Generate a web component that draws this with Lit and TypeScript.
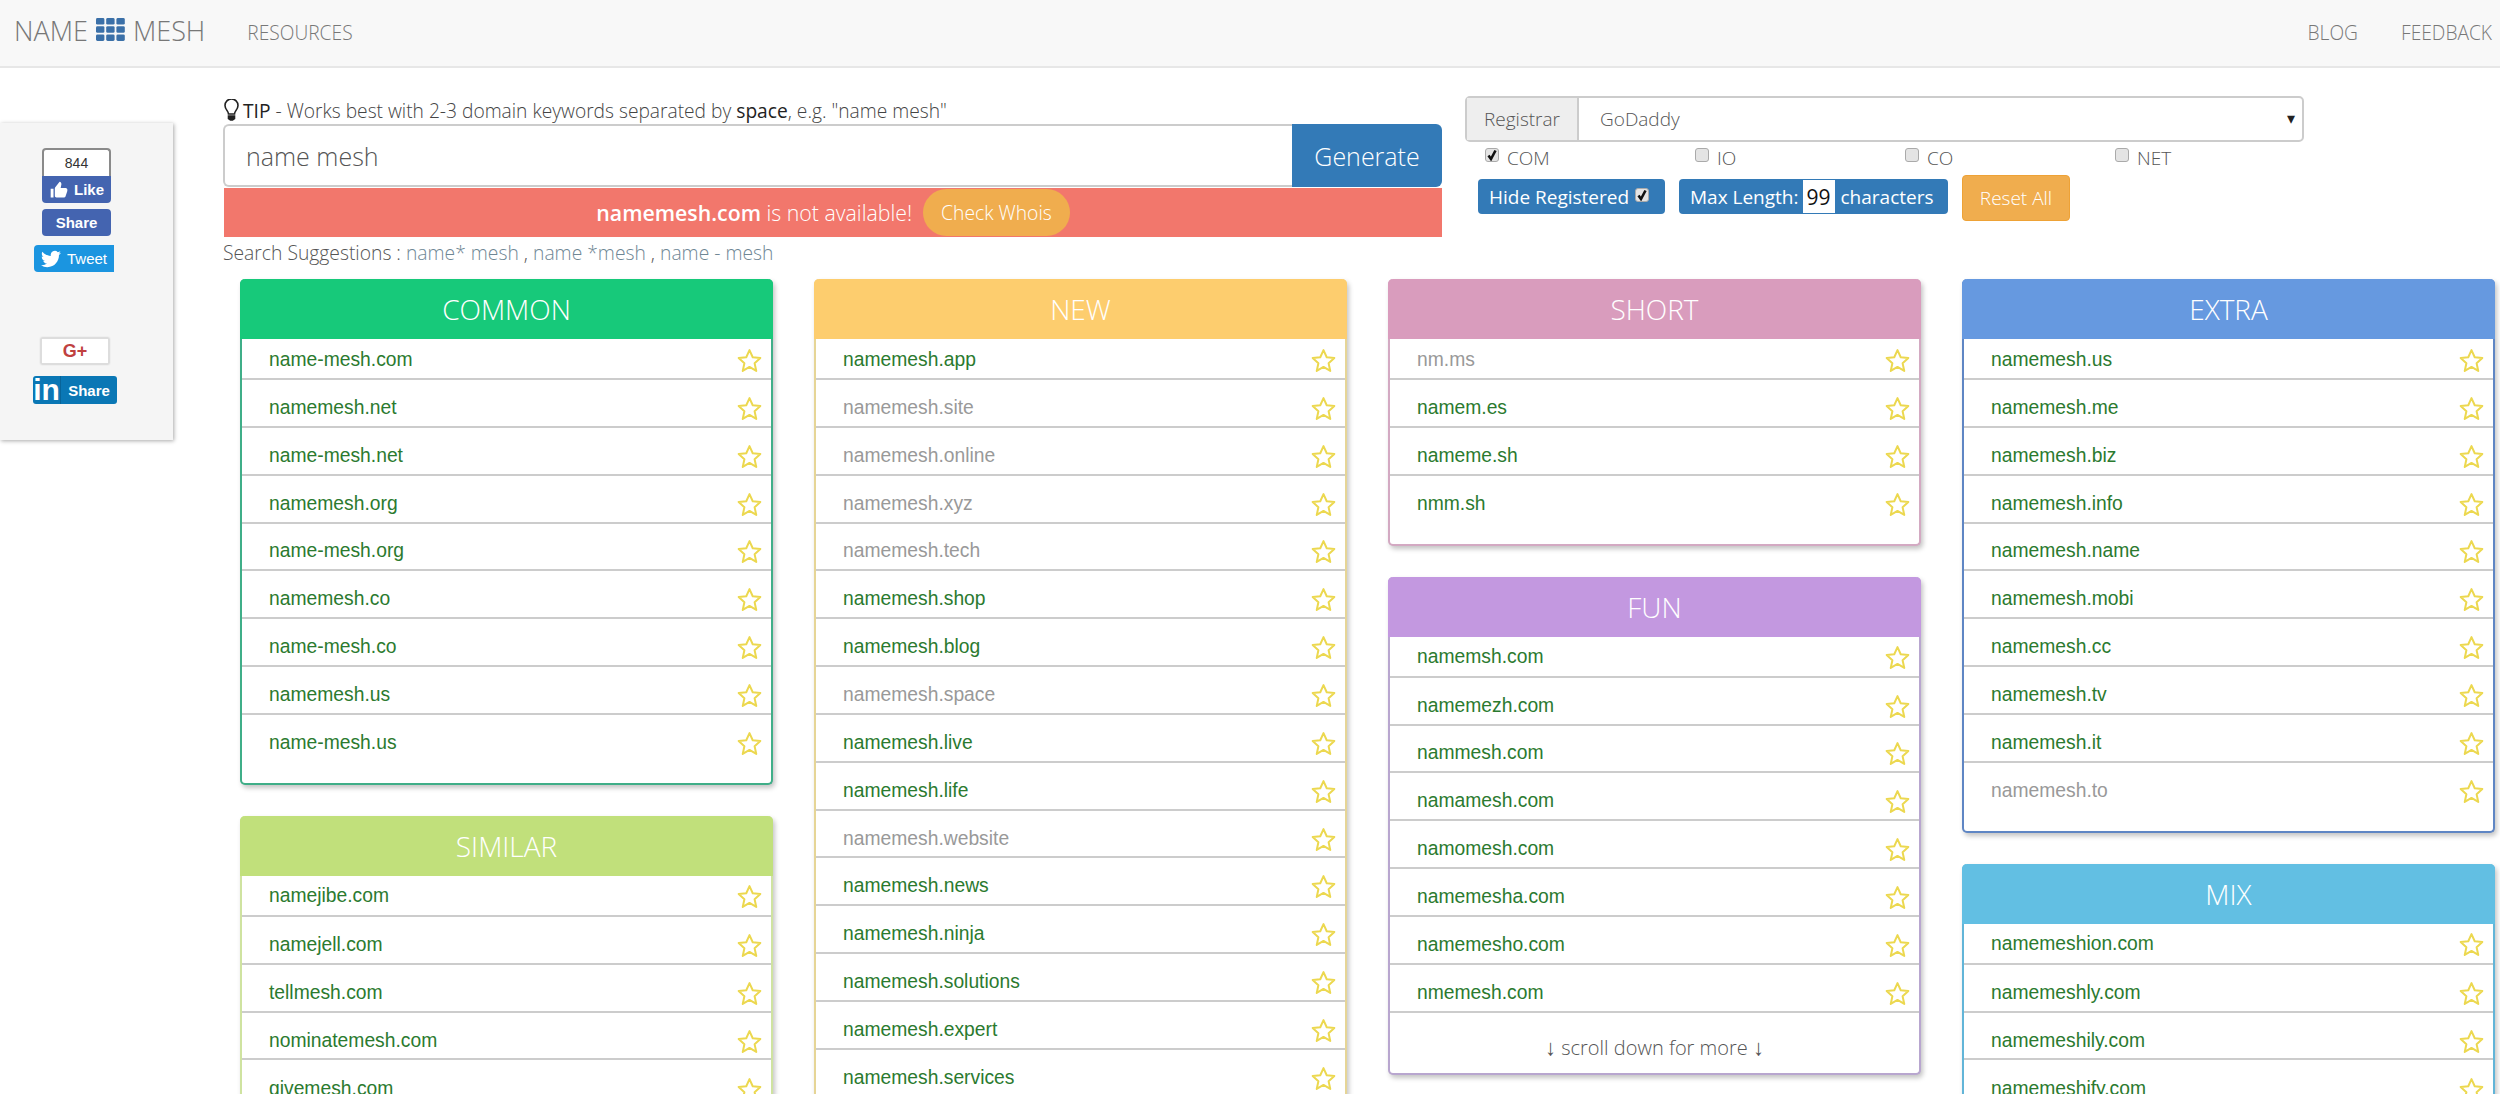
import { LitElement, css, html, svg } from "lit";
import { customElement } from "lit/decorators.js";

type Domain = string | { gray: string };
interface Panel {
  title: string;
  color: string;
  edge: string;
  rows: Domain[];
  more?: boolean;
}

const g = (gray: string): Domain => ({ gray });

const COLUMNS: Panel[][] = [
  [
    {
      title: "COMMON",
      color: "#17c97a",
      edge: "#3fae88",
      rows: [
        "name-mesh.com",
        "namemesh.net",
        "name-mesh.net",
        "namemesh.org",
        "name-mesh.org",
        "namemesh.co",
        "name-mesh.co",
        "namemesh.us",
        "name-mesh.us",
      ],
    },
    {
      title: "SIMILAR",
      color: "#c1e07b",
      edge: "#cfe3a0",
      rows: ["namejibe.com", "namejell.com", "tellmesh.com", "nominatemesh.com", "givemesh.com"],
    },
  ],
  [
    {
      title: "NEW",
      color: "#fdcd6e",
      edge: "#e6d596",
      rows: [
        "namemesh.app",
        g("namemesh.site"),
        g("namemesh.online"),
        g("namemesh.xyz"),
        g("namemesh.tech"),
        "namemesh.shop",
        "namemesh.blog",
        g("namemesh.space"),
        "namemesh.live",
        "namemesh.life",
        g("namemesh.website"),
        "namemesh.news",
        "namemesh.ninja",
        "namemesh.solutions",
        "namemesh.expert",
        "namemesh.services",
      ],
    },
  ],
  [
    {
      title: "SHORT",
      color: "#d99cbd",
      edge: "#d3a9c2",
      rows: [g("nm.ms"), "namem.es", "nameme.sh", "nmm.sh"],
    },
    {
      title: "FUN",
      color: "#c398e0",
      edge: "#b8a6cf",
      more: true,
      rows: [
        "namemsh.com",
        "namemezh.com",
        "nammesh.com",
        "namamesh.com",
        "namomesh.com",
        "namemesha.com",
        "namemesho.com",
        "nmemesh.com",
      ],
    },
  ],
  [
    {
      title: "EXTRA",
      color: "#6699e0",
      edge: "#5f86c4",
      rows: [
        "namemesh.us",
        "namemesh.me",
        "namemesh.biz",
        "namemesh.info",
        "namemesh.name",
        "namemesh.mobi",
        "namemesh.cc",
        "namemesh.tv",
        "namemesh.it",
        g("namemesh.to"),
      ],
    },
    {
      title: "MIX",
      color: "#62bfe3",
      edge: "#62b5d8",
      rows: ["namemeshion.com", "namemeshly.com", "namemeshily.com", "namemeshify.com"],
    },
  ],
];

const TLDS = [
  { name: "COM", on: true },
  { name: "IO", on: false },
  { name: "CO", on: false },
  { name: "NET", on: false },
];

const star = svg`<polygon points="12,2 15.1,8.9 22.4,9.6 16.9,14.6 18.5,22 12,18.2 5.5,22 7.1,14.6 1.6,9.6 8.9,8.9" />`;
const TWITTER =
  "M23.953 4.57a10 10 0 01-2.825.775 4.958 4.958 0 002.163-2.723c-.951.555-2.005.959-3.127 1.184a4.92 4.92 0 00-8.384 4.482C7.69 8.095 4.067 6.13 1.64 3.162a4.822 4.822 0 00-.666 2.475c0 1.71.87 3.213 2.188 4.096a4.904 4.904 0 01-2.228-.616v.06a4.923 4.923 0 003.946 4.827 4.996 4.996 0 01-2.212.085 4.936 4.936 0 004.604 3.417 9.867 9.867 0 01-6.102 2.105c-.39 0-.779-.023-1.17-.067a13.995 13.995 0 007.557 2.209c9.053 0 13.998-7.496 13.998-13.985 0-.21 0-.42-.015-.63A9.935 9.935 0 0024 4.59z";
const THUMB =
  "M2 21h3.4V10.500H2V21zm20-9.500c0-1.100-.9-2-2-2h-6l.9-4.400v-.3c0-.9-.5-2.800-2.200-2.800L8 8c-.5.5-1 1-1 2v9c0 1.100.9 2 2 2h9c.8 0 1.500-.5 1.800-1.200l2-6c.1-.2.2-.5.2-.8v-1.500z";

@customElement("app-root")
export class AppRoot extends LitElement {
  static override styles = css`
    :host {
      display: block;
      width: 2500px;
      height: 1094px;
      overflow: hidden;
      background: #fff;
      color: #333;
      font-family: "Open Sans", sans-serif;
      font-weight: 300;
    }
    * {
      box-sizing: border-box;
    }

    /* top bar */
    .nav {
      display: flex;
      align-items: center;
      height: 68px;
      padding: 0 8px 0 14px;
      background: #f8f8f8;
      border-bottom: 2px solid #e7e7e7;
      color: #777;
      font-size: 19.2px;
    }
    .logo {
      display: flex;
      align-items: center;
      gap: 8px;
      margin-right: 42px;
      font-size: 27px;
      margin-top: -6px;
    }
    .logo svg {
      width: 29px;
      height: 23px;
      fill: #3b70a8;
      margin-top: -2px;
    }
    .nav a {
      margin-top: -1px;
    }
    .nav .right {
      margin-left: auto;
      display: flex;
      gap: 43px;
    }

    .page {
      display: flex;
      align-items: flex-start;
    }

    /* share box */
    .social {
      flex: none;
      display: flex;
      flex-direction: column;
      align-items: center;
      width: 173px;
      height: 317px;
      margin-top: 55px;
      padding: 25px 22px 0 0;
      background: #f5f5f5;
      box-shadow: 1px 1px 4px #aaa;
      font-family: "Liberation Sans", Arial, sans-serif;
      font-weight: 700;
    }
    .fb {
      display: flex;
      align-items: center;
      justify-content: center;
      gap: 5px;
      width: 69px;
      color: #fff;
      font-size: 15px;
      background: #4464b0;
      border-radius: 0 0 4px 4px;
      height: 27px;
      margin-left: 2px;
    }
    .fb svg {
      width: 20px;
      height: 20px;
      fill: #fff;
    }
    .fb.count {
      height: 28px;
      background: #fff;
      border: 2px solid #8a8a8a;
      border-bottom: 0;
      border-radius: 4px 4px 0 0;
      color: #333;
      font-size: 14px;
      font-weight: 400;
    }
    .fb.share {
      height: 27px;
      margin-top: 6px;
      border-radius: 4px;
    }
    .tweet {
      display: flex;
      align-items: center;
      justify-content: center;
      gap: 6px;
      width: 80px;
      height: 27px;
      margin: 9px 0 0 -3px;
      background: #1b95e0;
      border-radius: 4px 0 0 4px;
      color: #fff;
      font-size: 15px;
      font-weight: 400;
    }
    .tweet svg {
      width: 20px;
      height: 20px;
      fill: #fff;
    }
    .gplus {
      display: flex;
      align-items: center;
      justify-content: center;
      width: 68px;
      height: 26px;
      margin: 66px 0 0 -1px;
      background: #fff;
      border: 1px solid #ddd;
      box-shadow: 0 0 2px #aaa;
      color: #c0413f;
      font-size: 18px;
    }
    .linkedin {
      display: flex;
      align-items: center;
      width: 84px;
      height: 28px;
      margin: 12px 0 0 -1px;
      background: #0a77b5;
      border-radius: 3px;
      color: #fff;
      font-size: 15px;
    }
    .linkedin b {
      width: 28px;
      border-right: 1px solid #086499;
      text-align: center;
      font-size: 30px;
      line-height: 28px;
    }
    .linkedin span {
      flex: 1;
      text-align: center;
    }

    .main {
      margin-left: 50px;
      padding-top: 28px;
    }
    .top {
      display: flex;
      height: 183px;
    }

    /* search */
    .search {
      width: 1219px;
      margin-right: 23px;
    }
    .tip {
      display: flex;
      align-items: center;
      height: 28px;
      font-size: 19.2px;
      color: #444;
      white-space: pre;
    }
    .tip svg {
      width: 17px;
      height: 22px;
      margin-right: 3px;
      fill: none;
      stroke: #222;
      stroke-width: 1.6;
    }
    .tip b {
      font-weight: 400;
      color: #222;
    }
    .bar {
      display: flex;
      height: 63px;
    }
    .bar input {
      flex: 1;
      padding: 0 21px;
      border: 2px solid #ccc;
      border-right: 0;
      border-radius: 6px 0 0 6px;
      outline: none;
      background: #fff;
      color: #555;
      font: 300 25px "Open Sans", sans-serif;
    }
    .bar button {
      width: 150px;
      border: 0;
      border-radius: 0 6px 6px 0;
      background: #337ab7;
      color: #fff;
      font: 300 25px "Open Sans", sans-serif;
    }
    .status {
      display: flex;
      align-items: center;
      justify-content: center;
      gap: 11px;
      height: 49px;
      margin: 1px 0 0 1px;
      background: #f2776c;
      color: #fff;
      font-size: 21.3px;
      white-space: pre;
    }
    .status b {
      font-weight: 600;
    }
    .status .whois {
      padding: 0 18px;
      height: 47px;
      line-height: 47px;
      border-radius: 24px;
      background: #f0ad4e;
      font-size: 19.3px;
    }
    .suggest {
      margin-top: 4px;
      font-size: 19.3px;
      line-height: 24px;
      color: #555;
    }
    .suggest a {
      color: #6f8795;
    }

    /* registrar and filters */
    .filters {
      width: 839px;
    }
    .registrar {
      display: flex;
      align-items: stretch;
      height: 46px;
      border: 2px solid #ccc;
      border-radius: 5px;
      font-size: 19px;
      color: #555;
      line-height: 42px;
    }
    .registrar .label {
      width: 112px;
      background: #eee;
      border-right: 2px solid #ccc;
      text-align: center;
    }
    .registrar .value {
      flex: 1;
      padding-left: 21px;
    }
    .registrar .arrow {
      width: 15px;
      font-size: 16px;
      color: #222;
      font-family: "DejaVu Sans", sans-serif;
    }
    .tlds {
      display: grid;
      grid-template-columns: repeat(4, 210px);
      height: 37px;
      padding: 4px 0 0 20px;
      font-size: 19px;
      color: #555;
    }
    .tld {
      display: flex;
      align-items: flex-start;
      gap: 8px;
      line-height: 24px;
    }
    .cb {
      display: block;
      flex: none;
      width: 14px;
      height: 14px;
      margin-top: 2px;
      border: 1px solid #aaa;
      border-radius: 3px;
      background: #e4e4e4;
      white-space: normal;
    }
    .cb svg {
      display: block;
      width: 12px;
      height: 12px;
      fill: none;
      stroke: #111;
      stroke-width: 2.6;
    }
    .actions {
      display: flex;
      align-items: flex-start;
      padding: 0 0 0 13px;
      gap: 14px;
      margin-top: -4px;
    }
    .pill {
      display: flex;
      align-items: center;
      height: 35px;
      margin-top: 4px;
      padding: 0 11px;
      border-radius: 4px;
      background: #337ab7;
      color: #fff;
      font-size: 19px;
      font-weight: 400;
      white-space: pre;
    }
    .pill.hide {
      width: 187px;
    }
    .pill.len {
      width: 269px;
    }
    .pill .cb {
      margin: -4px 0 0 6px;
    }
    .pill input {
      width: 32px;
      height: 33px;
      margin: 0 6px 0 4px;
      padding: 0;
      border: 0;
      background: #fff;
      color: #111;
      text-align: center;
      font: 400 21px "Open Sans", sans-serif;
    }
    .reset {
      display: flex;
      align-items: center;
      justify-content: center;
      width: 108px;
      height: 46px;
      border: 1px solid #eea236;
      border-radius: 4px;
      background: #f0ad4e;
      color: #fff;
      font-size: 19px;
    }

    /* result panels */
    .columns {
      display: flex;
      gap: 41px;
      margin-left: 17px;
    }
    .column {
      display: flex;
      flex-direction: column;
      gap: 31px;
      width: 533px;
    }
    .panel {
      border: solid var(--edge);
      border-width: 0 2px 2px;
      border-radius: 5px;
      background: #fff;
      box-shadow: 2px 3px 5px #c4c4c4;
    }
    .panel h2 {
      height: 60px;
      margin: 0 -2px;
      border-radius: 5px 5px 0 0;
      background: var(--head);
      color: #fff;
      font-size: 28px;
      font-weight: 300;
      line-height: 60px;
      text-align: center;
    }
    .row {
      display: flex;
      align-items: center;
      justify-content: space-between;
      height: 47.85px;
      padding: 8px 9px 0 27px;
      border-bottom: 2px solid #ccc;
      color: #2b7a2f;
      font: 400 19.3px "Liberation Sans", Arial, sans-serif;
    }
    .row span {
      margin-top: 2px;
    }
    .row:first-child {
      height: 41px;
      padding-top: 0;
    }
    .row:last-child {
      height: 68px;
      padding-bottom: 21px;
      border-bottom: 0;
    }
    .row.gray {
      color: #999;
    }
    .row svg {
      width: 25px;
      height: 25px;
      margin-top: 3px;
      fill: #fff;
      stroke: #ecd84f;
      stroke-width: 1.9;
      stroke-linejoin: round;
    }
    .more {
      height: 60px;
      padding-top: 20px;
      text-align: center;
      font-size: 20px;
      line-height: 30px;
      color: #555;
    }
    .more i {
      font: 300 22px "Liberation Sans", Arial, sans-serif;
    }
  `;

  private renderRow(row: Domain) {
    const gray = typeof row !== "string";
    const name = typeof row === "string" ? row : row.gray;
    return html`
      <div class="row ${gray ? "gray" : ""}">
        <span>${name}</span>
        <svg viewBox="0 0 24 24">${star}</svg>
      </div>
    `;
  }

  private renderPanel(panel: Panel) {
    return html`
      <section class="panel" style="--head:${panel.color};--edge:${panel.edge}">
        <h2>${panel.title}</h2>
        <div class="list">
          ${panel.rows.map((r) => this.renderRow(r))}
          ${panel.more ? html`<div class="more"><i>↓</i> scroll down for more <i>↓</i></div>` : ""}
        </div>
      </section>
    `;
  }

  private renderCheck(on: boolean) {
    return html`<span class="cb">${on ? html`<svg viewBox="0 0 12 12"><path d="M2.5 6.5 5 10 9.5 1.5" /></svg>` : ""}</span>`;
  }

  override render() {
    const cells = [0, 1, 2].flatMap((r) => [0, 1, 2].map((c) => [c, r]));
    return html`
      <nav class="nav">
        <div class="logo">
          NAME
          <svg viewBox="0 0 29 23">
            ${cells.map(
              ([c, r]) => svg`<rect x=${c * 10.2} y=${r * 8.2} width="8.4" height="6.6" rx="1.4" />`
            )}
          </svg>
          MESH
        </div>
        <a>RESOURCES</a>
        <div class="right"><a>BLOG</a><a>FEEDBACK</a></div>
      </nav>
      <div class="page">
        <aside class="social">
          <div class="fb count">844</div>
          <div class="fb"><svg viewBox="0 0 24 24"><path d=${THUMB} /></svg>Like</div>
          <div class="fb share">Share</div>
          <div class="tweet"><svg viewBox="0 0 24 24"><path d=${TWITTER} /></svg>Tweet</div>
          <div class="gplus">G+</div>
          <div class="linkedin"><b>in</b><span>Share</span></div>
        </aside>
        <div class="main">
          <div class="top">
            <div class="search">
              <div class="tip">
                <svg viewBox="0 0 17 22">
                  <path d="M5.5 15c0-3-3.5-4.5-3.5-8.5a6.5 6.5 0 0 1 13 0c0 4-3.5 5.500-3.500 8.500z" />
                  <path d="M5.5 17h6v2.5l-2 1.5h-2l-2-1.5z" fill="#222" />
                </svg>
                <span><b>TIP</b> - Works best with 2-3 domain keywords separated by <b>space</b>, e.g. "name mesh"</span>
              </div>
              <div class="bar">
                <input type="text" value="name mesh" />
                <button>Generate</button>
              </div>
              <div class="status">
                <span><b>namemesh.com</b> is not available!</span>
                <span class="whois">Check Whois</span>
              </div>
              <div class="suggest">
                Search Suggestions : <a>name* mesh</a> , <a>name *mesh</a> , <a>name - mesh</a>
              </div>
            </div>
            <div class="filters">
              <div class="registrar">
                <div class="label">Registrar</div>
                <div class="value">GoDaddy</div>
                <div class="arrow">▾</div>
              </div>
              <div class="tlds">
                ${TLDS.map(
                  (t) => html`<label class="tld">${this.renderCheck(t.on)}${t.name}</label>`
                )}
              </div>
              <div class="actions">
                <div class="pill hide">Hide Registered${this.renderCheck(true)}</div>
                <div class="pill len">Max Length:<input type="text" value="99" />characters</div>
                <div class="reset">Reset All</div>
              </div>
            </div>
          </div>
          <div class="columns">
            ${COLUMNS.map(
              (col) => html`<div class="column">${col.map((p) => this.renderPanel(p))}</div>`
            )}
          </div>
        </div>
      </div>
    `;
  }
}

declare global {
  interface HTMLElementTagNameMap {
    "app-root": AppRoot;
  }
}
